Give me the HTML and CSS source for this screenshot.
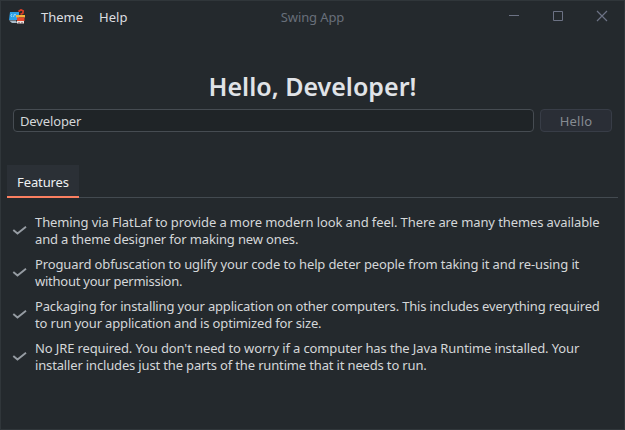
FILE: index.html
```html
<!DOCTYPE html>
<html lang="en">
<head>
<meta charset="utf-8">
<title>Swing App</title>
<link rel="stylesheet" href="styles.css">
</head>
<body>
<div class="window">
  <header class="titlebar">
    <svg class="logo" width="16" height="16" viewBox="0 0 16 16">
      <path d="M1 3h9v7l-2 1H0z" fill="#2b9fe6"/>
      <path d="M0 11.500h7l1 2.500H3z" fill="#a8bac8"/>
      <path d="M3 5L2 6.500 3 8M4.500 8l1-3M6 5l1 1.500" fill="none" stroke="#c9efff" stroke-width=".7"/>
      <path d="M9.500 2.500L12 .8l2.200 1.200-.4 2.300-2.300 1" fill="none" stroke="#d93e27" stroke-width="1.700"/>
      <path d="M7 6h9v2.500H7z" fill="#f3b43c"/>
      <path d="M8 8.500h7.500V12H8z" fill="#e5452b"/>
      <path d="M8 12h7v2.500H8z" fill="#eee3df"/>
      <path d="M9.500 13h1v1.500h-1zM12.500 13h1v1.500h-1z" fill="#69424a"/>
    </svg>
    <nav class="menu"><span>Theme</span><span>Help</span></nav>
    <div class="title">Swing App</div>
    <div class="controls">
      <svg width="44" height="32" viewBox="0 0 44 32"><path d="M17 15.500h10"/></svg>
      <svg width="44" height="32" viewBox="0 0 44 32"><path d="M17.500 11.500h9v9h-9z"/></svg>
      <svg class="close" width="44" height="32" viewBox="0 0 44 32"><path d="M17 11l10 10M27 11l-10 10"/></svg>
    </div>
  </header>
  <main>
    <h1>Hello, Developer!</h1>
    <div class="form">
      <div class="field">Developer</div>
      <div class="button">Hello</div>
    </div>
    <div class="tabs"><div class="tab">Features</div></div>
    <ul class="features">
      <li><svg class="check" width="16" height="16" viewBox="0 0 16 16"><path d="M1.300 7L5.500 10.500 14 3.800"/></svg><p><span class="l1">Theming via FlatLaf to provide a more modern look and feel. There are many themes available</span><br><span class="l2">and a theme designer for making new ones.</span></p></li>
      <li><svg class="check" width="16" height="16" viewBox="0 0 16 16"><path d="M1.300 7L5.500 10.500 14 3.800"/></svg><p><span class="l3">Proguard obfuscation to uglify your code to help deter people from taking it and re-using it</span><br><span class="l4">without your permission.</span></p></li>
      <li><svg class="check" width="16" height="16" viewBox="0 0 16 16"><path d="M1.300 7L5.500 10.500 14 3.800"/></svg><p><span class="l5">Packaging for installing your application on other computers. This includes everything required</span><br><span class="l6">to run your application and is optimized for size.</span></p></li>
      <li><svg class="check" width="16" height="16" viewBox="0 0 16 16"><path d="M1.300 7L5.500 10.500 14 3.800"/></svg><p><span class="l7">No JRE required. You don't need to worry if a computer has the Java Runtime installed. Your</span><br><span class="l8">installer includes just the parts of the runtime that it needs to run.</span></p></li>
    </ul>
  </main>
</div>
</body>
</html>
```
FILE: styles.css
```css
* { box-sizing: border-box; }
body { margin: 0; background: #24292d; font: 13px/17px "Noto Sans", sans-serif; color: #d4d7d9; }
.window { width: 625px; height: 430px; border: 1px solid #30363a; overflow: hidden; }
.titlebar { display: grid; grid-template-columns: 40px 203px 136px 1fr; height: 32px; align-items: center; color: #dcdee0; white-space: nowrap; }
.logo { margin-left: 8px; }
.menu { display: flex; gap: 16px; }
.title { padding-left: 1px; text-align: center; color: #686f7a; letter-spacing: -0.1px; }
.controls { display: flex; height: 32px; justify-content: flex-end; }
.controls svg { fill: none; stroke: #6c7284; stroke-width: 1; flex: none; margin-top: -1px; }
.controls .close { stroke-width: 1.2; }
h1 { margin: 38px 0 0; height: 38px; line-height: 31px; font-size: 25px; font-weight: 600; text-align: center; color: #e0e3e7; }
.form { display: flex; gap: 6px; margin: 0 12px; height: 23px; }
.field, .button { border: 1px solid #464c52; border-radius: 4px; line-height: 22px; }
.field { width: 521px; padding-left: 6px; background: #1f2427; letter-spacing: -0.12px; }
.button { width: 72px; text-align: center; background: #2a2e36; border-color: #383d47; color: #868b92; letter-spacing: .2px; }
.tabs { height: 33px; margin: 33px 6px 0; border-bottom: 1px solid #434a50; }
.tab { width: 72px; height: 33px; padding-left: 10px; line-height: 34px; background: #2b3036; border-bottom: 2px solid #fb7f61; color: #eef0f2; letter-spacing: -0.1px; }
.features { list-style: none; margin: 16px 6px 0; padding: 0; display: grid; gap: 8px; white-space: nowrap; }
.features li { display: flex; align-items: center; gap: 7px; padding-left: 5px; }
.features p { margin: 0; }
.check { flex: none; fill: none; stroke: #969ca3; stroke-width: 1.9; }
.l1 { letter-spacing: -0.1px; }
.l2 { letter-spacing: -0.145px; }
.l3 { letter-spacing: -0.12px; }
.l4 { letter-spacing: -0.24px; }
.l5 { letter-spacing: -0.165px; }
.l6 { letter-spacing: -0.16px; }
.l7 { letter-spacing: -0.12px; }
.l8 { letter-spacing: -0.157px; }
```
